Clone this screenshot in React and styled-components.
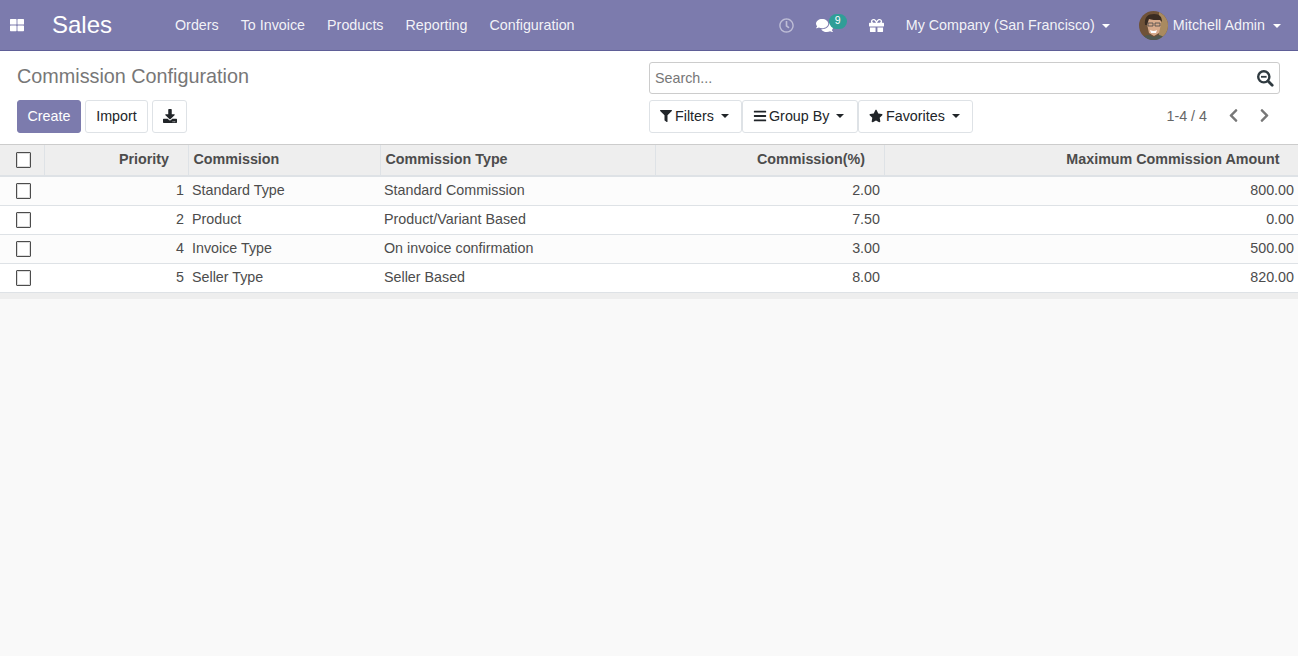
import React from "react";
import styled, { createGlobalStyle } from "styled-components";
import { FaThLarge, FaRegClock, FaComments, FaGift, FaDownload, FaFilter, FaBars, FaStar, FaChevronLeft, FaChevronRight } from "react-icons/fa";

const Global = createGlobalStyle`
  html, body { margin: 0; padding: 0; height: 100%; background: #f9f9f9; }
  body { font-family: "Liberation Sans", Arial, sans-serif; font-size: 14.3px; color: #4c4c4c; overflow: hidden; }
  #root { height: 100%; }
  * { box-sizing: border-box; }
`;
const Page = styled.div`display: flex; flex-direction: column; height: 656px;`;
const Nav = styled.header`
  display: flex; align-items: center; height: 51px; flex: none; background: #7c7bad;
  border-bottom: 1px solid #5f5e97; color: #fff; padding: 0 17px 0 10px;
`;
const Apps = styled.span`display: flex; font-size: 14px; width: 42px; color: #fff;`;
const Brand = styled.span`font-size: 24px; width: 123px; line-height: 1;`;
const Menu = styled.nav`display: flex; gap: 22px; flex: 1; color: rgba(255,255,255,.92);`;
const Sys = styled.div`display: flex; align-items: center; color: rgba(255,255,255,.92);`;
const SysIcon = styled.span`position: relative; display: flex; font-size: ${p => p.$size || 15}px; color: ${p => p.$color || "#fff"}; margin-right: ${p => p.$mr}px;`;
const Badge = styled.span`
  position: absolute; left: 13px; top: -3px; width: 18px; height: 15px; border-radius: 8px;
  background: #2f9e97; color: #fff; font-size: 10.5px; line-height: 13px; text-align: center;
`;
const Caret = styled.span`
  display: inline-block; width: 0; height: 0; margin-left: ${p => p.$ml || 8}px; vertical-align: 2px;
  border-top: 4.5px solid ${p => p.$color || "#fff"}; border-left: 4.5px solid transparent; border-right: 4.5px solid transparent;
`;
const Avatar = styled.svg`width: 29px; height: 29px; border-radius: 50%; margin: 0 5px 0 29px; display: block;`;
const Panel = styled.section`
  display: grid; grid-template-columns: 632px 1fr; flex: none; height: 94px; background: #fff;
  border-bottom: 1px solid #ccc; padding: 11px 18px 0 17px; row-gap: 6px; grid-template-rows: 32px 33px;
`;
const Title = styled.h1`margin: 0; font-weight: 400; font-size: 19.8px; line-height: 29px; color: #777;`;
const SearchBox = styled.div`
  display: flex; align-items: center; justify-content: space-between; height: 32px;
  border: 1px solid #ccc; border-radius: 3px; padding: 0 5px; color: #777;
`;
const Actions = styled.div`display: flex; gap: 4px;`;
const Btn = styled.button`
  height: 33px; width: ${p => p.$w}px; padding: 0 0 2px; justify-content: center; border-radius: 3px; font: inherit; display: flex; align-items: center;
  background: ${p => p.$primary ? "#7c7bad" : "#fff"}; color: ${p => p.$primary ? "#fff" : "#212529"};
  border: 1px solid ${p => p.$primary ? "#7c7bad" : "#dee2e6"};
`;
const RightRow = styled.div`display: flex; justify-content: space-between; align-items: center;`;
const Filters = styled.div`display: flex;`;
const FBtn = styled(Btn)`padding: 0 0 2px 10px; justify-content: flex-start; gap: ${p => p.$gap ?? 3}px; white-space: nowrap;`;
const Pager = styled.div`display: flex; align-items: center; color: #666; margin-right: 8px; padding-bottom: 2px;`;
const PagerIcon = styled.span`display: flex; font-size: 15px; color: #777; margin-left: ${p => p.$ml}px;`;
const Table = styled.table`
  width: 1298px; table-layout: fixed; border-collapse: collapse; background: #fff; flex: none;
`;
const Th = styled.th`
  height: 31px; padding: 0 ${p => p.$right ? 18.5 : 4}px 2px ${p => p.$right ? 4 : 5}px; font-weight: 700; font-size: 14.3px; color: #4c4c4c;
  text-align: ${p => p.$right ? "right" : "left"}; background: #eee;
  border-bottom: 2px solid #dee2e6; border-left: 1px solid #dee2e6;
  &:first-child { border-left: none; padding: 0 0 0 16px; }
`;
const Td = styled.td`
  height: 29px; padding: 0 4px 2px; text-align: ${p => p.$right ? "right" : "left"}; color: #4c4c4c;
  &:first-child { padding: 0 0 0 16px; }
`;
const Tr = styled.tr`border-bottom: 1px solid #dee2e6; background: ${p => p.$odd ? "#fcfcfc" : "#fff"};`;
const Check = styled.span`
  display: block; width: 15px; height: 16px; border: 1px solid #4c4c4c;
  box-shadow: inset 0 0 0 1px #dcdcdc; background: #fff; border-radius: 1px;
`;
const Foot = styled.div`height: 6px; flex: none; background: #eee;`;

const rows = [
  [1, "Standard Type", "Standard Commission", "2.00", "800.00"],
  [2, "Product", "Product/Variant Based", "7.50", "0.00"],
  [4, "Invoice Type", "On invoice confirmation", "3.00", "500.00"],
  [5, "Seller Type", "Seller Based", "8.00", "820.00"],
];

export default function App() {
  return (
    <Page>
      <Global />
      <Nav>
        <Apps><FaThLarge /></Apps>
        <Brand>Sales</Brand>
        <Menu>
          <span>Orders</span><span>To Invoice</span><span>Products</span><span>Reporting</span><span>Configuration</span>
        </Menu>
        <Sys>
          <SysIcon $color="rgba(255,255,255,.5)" $mr={22}><FaRegClock /></SysIcon>
          <SysIcon $size={17} $mr={36}><FaComments /><Badge>9</Badge></SysIcon>
          <SysIcon $mr={22}><FaGift /></SysIcon>
          <span>My Company (San Francisco)<Caret $ml={7} /></span>
          <Avatar viewBox="0 0 29 29">
            <rect width="29" height="29" fill="#6f5238" />
            <path d="M20 0h9v29h-9z" fill="#a98a60" />
            <path d="M8 13c0-7 3-9 7-9s7 3 7 9l-2 9-5 3-5-3z" fill="#d9ab8c" />
            <path d="M6 14C5 6 9 3 15 3s8 3 8 8l-2-2c-4 0-9 0-11-1l-2 6z" fill="#3a2c22" />
            <path d="M9 12h5v3H9zM16 12h5v3h-5z" fill="none" stroke="#444" strokeWidth=".8" />
            <path d="M11 19q4 2 7 0l-1 3h-5z" fill="#fff" />
            <path d="M2 29q2-5 8-5l5 2 5-2q5 1 7 5z" fill="#50584f" />
          </Avatar>
          <span>Mitchell Admin<Caret /></span>
        </Sys>
      </Nav>
      <Panel>
        <Title>Commission Configuration</Title>
        <SearchBox>
          <span>Search...</span>
          <svg width="18" height="18" viewBox="0 0 18 18" fill="none" stroke="#2f3a40">
            <circle cx="7.8" cy="7.8" r="5.6" strokeWidth="2.4" />
            <path d="M5 7.8h5.6" strokeWidth="1.8" />
            <path d="M12 12l4.2 4.2" strokeWidth="2.8" strokeLinecap="round" />
          </svg>
        </SearchBox>
        <Actions>
          <Btn $primary $w={64}>Create</Btn>
          <Btn $w={63}>Import</Btn>
          <Btn $w={35}><FaDownload size={14} /></Btn>
        </Actions>
        <RightRow>
          <Filters>
            <FBtn $w={93}><FaFilter size={12} />Filters<Caret $color="#212529" $ml={4} /></FBtn>
            <FBtn $w={116} $gap={2}><FaBars size={14} />Group By<Caret $color="#212529" $ml={5} /></FBtn>
            <FBtn $w={115}><FaStar size={14} />Favorites<Caret $color="#212529" $ml={4} /></FBtn>
          </Filters>
          <Pager>
            1-4 / 4
            <PagerIcon $ml={19}><FaChevronLeft /></PagerIcon>
            <PagerIcon $ml={16}><FaChevronRight /></PagerIcon>
          </Pager>
        </RightRow>
      </Panel>
      <Table>
        <colgroup>
          <col width="44" /><col width="144" /><col width="192" /><col width="275" /><col width="229" /><col width="414" />
        </colgroup>
        <thead>
          <tr>
            <Th><Check /></Th>
            <Th $right>Priority</Th>
            <Th>Commission</Th>
            <Th>Commission Type</Th>
            <Th $right>Commission(%)</Th>
            <Th $right>Maximum Commission Amount</Th>
          </tr>
        </thead>
        <tbody>
          {rows.map((r, i) => (
            <Tr key={r[0]} $odd={i % 2 === 0}>
              <Td><Check /></Td>
              <Td $right>{r[0]}</Td>
              <Td>{r[1]}</Td>
              <Td>{r[2]}</Td>
              <Td $right>{r[3]}</Td>
              <Td $right>{r[4]}</Td>
            </Tr>
          ))}
        </tbody>
      </Table>
      <Foot />
    </Page>
  );
}
